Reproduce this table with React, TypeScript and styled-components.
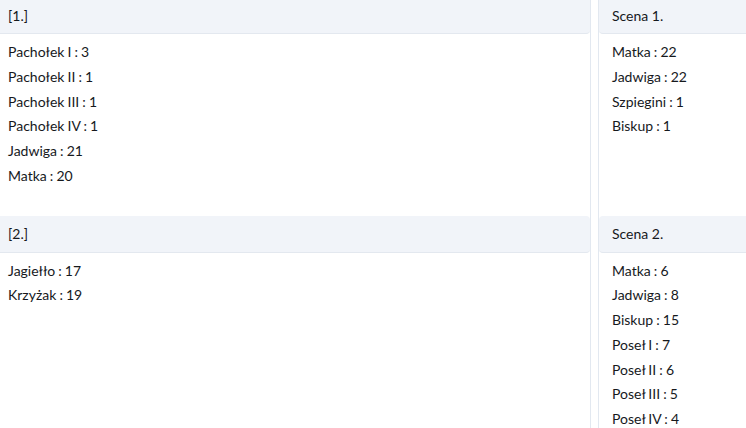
import React from "react";
import styled, { createGlobalStyle } from "styled-components";

const Global = createGlobalStyle`
  html, body { margin: 0; padding: 0; background: #ffffff; }
  body { font-family: Lato, "Noto Sans", sans-serif; color: #16191d; overflow: hidden; }
`;

const Board = styled.div`
  display: grid;
  grid-template-columns: 597px 600px;
  column-gap: 7px;
  margin: -3px 0 0 -6px;
`;

const Cell = styled.section`
  border-left: 1px solid #e2e8f0;
  border-right: 1px solid #e2e8f0;
  padding-bottom: 27px;
`;

const Header = styled.div`
  height: 36px;
  display: flex;
  align-items: center;
  padding: 0 13px;
  background: #f1f4f9;
  border-bottom: 1px solid #e3e8ef;
  border-radius: 4px;
  font-size: 14px;
  color: #16191d;
`;

const List = styled.ul`
  list-style: none;
  margin: 0;
  padding: 6px 13px 0;
`;

const Item = styled.li`
  font-size: 14px;
  line-height: 24.75px;
  white-space: nowrap;
  word-spacing: -0.5px;
`;

type Section = { title: string; items: [string, number][] };

const rows: Section[][] = [
  [
    {
      title: "[1.]",
      items: [
        ["Pachołek I", 3],
        ["Pachołek II", 1],
        ["Pachołek III", 1],
        ["Pachołek IV", 1],
        ["Jadwiga", 21],
        ["Matka", 20],
      ],
    },
    {
      title: "Scena 1.",
      items: [
        ["Matka", 22],
        ["Jadwiga", 22],
        ["Szpiegini", 1],
        ["Biskup", 1],
      ],
    },
  ],
  [
    {
      title: "[2.]",
      items: [
        ["Jagiełło", 17],
        ["Krzyżak", 19],
      ],
    },
    {
      title: "Scena 2.",
      items: [
        ["Matka", 6],
        ["Jadwiga", 8],
        ["Biskup", 15],
        ["Poseł I", 7],
        ["Poseł II", 6],
        ["Poseł III", 5],
        ["Poseł IV", 4],
      ],
    },
  ],
];

export default function App() {
  return (
    <>
      <Global />
      <Board>
        {rows.flat().map((s, i) => (
          <Cell key={i}>
            <Header>{s.title}</Header>
            <List>
              {s.items.map(([name, n], j) => (
                <Item key={j}>
                  {name} : {n}
                </Item>
              ))}
            </List>
          </Cell>
        ))}
      </Board>
    </>
  );
}
